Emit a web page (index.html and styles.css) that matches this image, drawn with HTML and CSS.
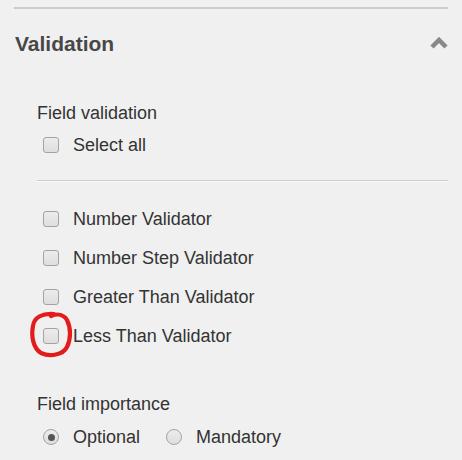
FILE: index.html
```html
<!DOCTYPE html>
<html lang="en">
<head>
<meta charset="UTF-8"/>
<meta name="viewport" content="width=device-width, initial-scale=1.0"/>
<title>Validation</title>
<link rel="stylesheet" href="styles.css">
</head>
<body>

<div class="panel">
  <div class="panel-head">
    <h2>Validation</h2>
    <svg class="chevron" width="18" height="12" viewBox="0 0 18 12">
      <polyline points="2,10 9,3 16,10" fill="none" stroke="#888" stroke-width="4.5"/>
    </svg>
  </div>

  <div class="panel-body">
    <div class="group-label">Field validation</div>
    <label class="row"><input type="checkbox"> Select all</label>

    <hr class="divider">

    <div class="list">
      <label class="row"><input type="checkbox"> Number Validator</label>
      <label class="row"><input type="checkbox"> Number Step Validator</label>
      <label class="row"><input type="checkbox"> Greater Than Validator</label>
      <label class="row marked"><input type="checkbox"> Less Than Validator
        <svg class="scribble" width="48" height="48" viewBox="0 0 48 48">
          <path d="M25,4 C14,3 5,7 4,16 C2,26 4,38 12,43 C21,47 34,45 38,37 C42,29 42,18 38,10 C35,5 29,3 22,6"
                fill="none" stroke="#e31b1b" stroke-width="4.2" stroke-linecap="round"/>
        </svg>
      </label>
    </div>

    <div class="group-label importance">Field importance</div>
    <div class="radios">
      <label class="row"><input type="radio" name="imp" checked> Optional</label>
      <label class="row"><input type="radio" name="imp"> Mandatory</label>
    </div>
  </div>
</div>

</body>
</html>
```

FILE: styles.css
```css
body {
  margin: 0; padding: 0;
  background: #f0f0f0; color: #333;
  font-family: "Liberation Sans", Arial, sans-serif;
  font-size: 18px;
}
.panel {
  margin: 7px 14px 0;
  border-top: 2px solid #ccc;
}
.panel-head {
  height: 70px;
  display: flex; justify-content: space-between; align-items: center;
}
.panel-head h2 {
  margin: 0; font-size: 21px; color: #474747;
  padding-left: 1px;
}
.chevron { margin-top: -2px; }
.panel-body { padding-left: 23px; }
.group-label {
  margin-top: 22px; line-height: 24px;
}
.row {
  display: flex; align-items: center;
  height: 24px; line-height: 24px;
  position: relative;
}
.panel-body > .row { margin-top: 8px; padding-left: 6px; }
.row input {
  appearance: none; -webkit-appearance: none;
  width: 16px; height: 16px; margin: 0 14px 0 0;
  border: 1px solid #a3a3a3; border-radius: 3px;
  background: linear-gradient(#ececec, #dedede);
  box-sizing: border-box;
}
.row input[type="radio"] {
  border-radius: 50%;
  position: relative;
}
.row input[type="radio"]:checked::after {
  content: ""; position: absolute; left: 3.5px; top: 3.5px;
  width: 7px; height: 7px; border-radius: 50%; background: #555;
}
.divider {
  margin: 23px 0 0; border: none;
  border-top: 1px solid #ccc; border-bottom: 1px solid #fafafa;
}
.list {
  margin-top: 25px; padding-left: 6px;
  display: flex; flex-direction: column; gap: 15px;
}
.scribble {
  position: absolute; left: -14px; top: -14px;
}
.importance { margin-top: 44px; }
.radios {
  margin-top: 9px; padding-left: 6px;
  display: flex; gap: 26px;
}
```
